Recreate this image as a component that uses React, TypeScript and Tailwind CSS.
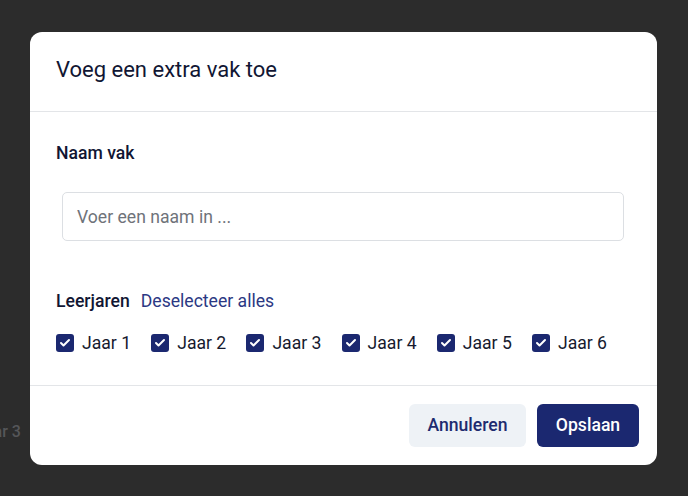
import { Check } from "lucide-react"

const years = ["Jaar 1", "Jaar 2", "Jaar 3", "Jaar 4", "Jaar 5", "Jaar 6"]

export default function App() {
  return (
    <div className="relative w-[688px] h-[496px] bg-[#2c2c2c] overflow-hidden font-['Roboto',sans-serif]">
      {/* page behind the overlay */}
      <div className="absolute left-[-24px] top-[420px] text-[16px] font-medium text-[#555659]">Jaar 3</div>

      <div className="absolute left-[30px] top-[32px] w-[627px] h-[433px] bg-white rounded-[12px] flex flex-col">
        {/* Header */}
        <div className="h-[80px] flex items-center px-[26px] border-b border-[#e3e5e8]">
          <h2 className="text-[22px] leading-7 text-[#111633] pb-[3px]">Voeg een extra vak toe</h2>
        </div>

        {/* Body */}
        <div className="flex-1 px-[26px] pt-[29px] border-b border-[#e3e5e8]">
          <label className="block text-[17.6px] leading-6 font-medium text-[#111633]">Naam vak</label>
          <input
            type="text"
            placeholder="Voer een naam in ..."
            className="mt-[27px] ml-[6px] w-[562px] h-[49px] rounded-[5px] border border-[#dcdfe3] px-[14px] text-[17.6px] text-[#111633] placeholder:text-[#6f737a] outline-none"
          />

          <div className="mt-[48px] flex items-center gap-[11px] leading-6">
            <span className="text-[17.6px] font-medium text-[#111633]">Leerjaren</span>
            <button className="text-[17.6px] text-[#2b3883]">Deselecteer alles</button>
          </div>

          <div className="mt-[18px] flex items-center">
            {years.map((y) => (
              <label key={y} className="w-[95.2px] flex items-center gap-[8px] leading-6 shrink-0">
                <span className="w-[18px] h-[18px] rounded-[3px] bg-[#1b2870] flex items-center justify-center">
                  <Check className="w-[12px] h-[12px] text-white" strokeWidth={4} />
                </span>
                <span className="text-[17.6px] text-[#161a2e]">{y}</span>
              </label>
            ))}
          </div>
        </div>

        {/* Footer */}
        <div className="h-[79px] flex items-center justify-end gap-[11px] pr-[18px]">
          <button className="h-[43px] w-[117px] rounded-[6px] bg-[#eef2f6] text-[17.6px] font-medium text-[#1e2b6f]">
            Annuleren
          </button>
          <button className="h-[43px] w-[102px] rounded-[6px] bg-[#1b2870] text-[17.6px] font-medium text-white">
            Opslaan
          </button>
        </div>
      </div>
    </div>
  )
}
